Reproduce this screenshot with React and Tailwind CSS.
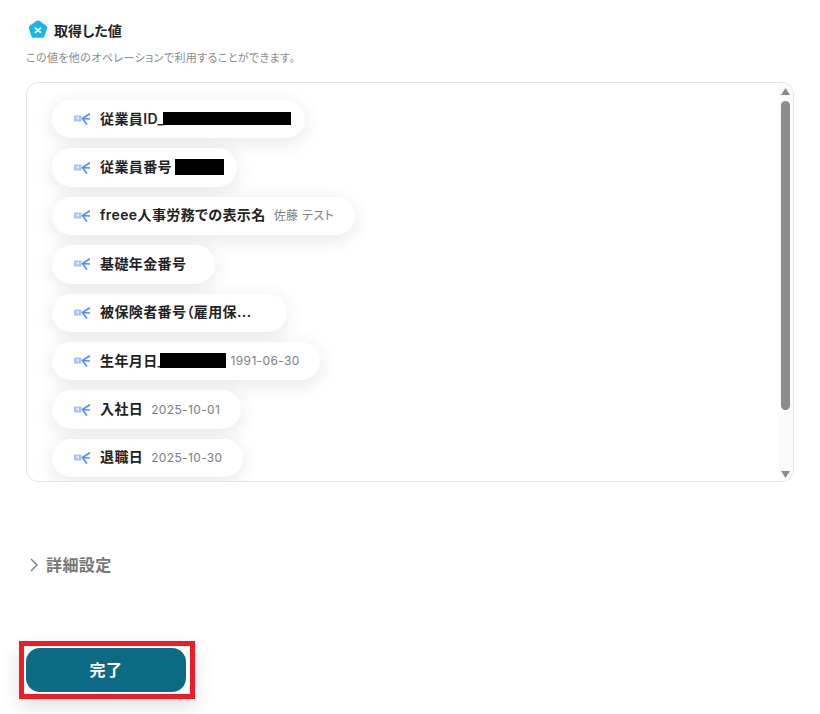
const font = "font-['Inter','Noto_Sans_CJK_JP',sans-serif] [font-feature-settings:'palt']";

const rows = [
  { label: '従業員ID_', mask: 128, maskH: 13, maskClass: '-ml-[1px]', width: 253 },
  { label: '従業員番号', mask: 49, maskH: 16, maskClass: 'ml-[3px]', width: 185 },
  { label: 'freee人事労務での表示名', value: '佐藤 テスト', width: 303 },
  { label: '基礎年金番号', width: 163 },
  { label: '被保険者番号（雇用保...', width: 235 },
  { label: '生年月日_', mask: 66, maskH: 15, maskClass: '-ml-[5px]', value: '1991-06-30', valueClass: 'ml-[5px]', width: 268 },
  { label: '入社日', value: '2025-10-01', width: 189 },
  { label: '退職日', value: '2025-10-30', width: 191 },
];

function Logo() {
  return (
    <svg width="20" height="20" viewBox="0 0 22 22">
      <path d="M9.2 1.1a3 3 0 0 1 3.6 0l7 5a3 3 0 0 1 1.1 3.4l-2.6 8a3 3 0 0 1-2.9 2.1H6.6a3 3 0 0 1-2.9-2.1l-2.6-8a3 3 0 0 1 1.1-3.4z" fill="#16b8e6" />
      <path d="M8.2 9l5.6 4.6M13.8 9l-5.6 4.6" stroke="#fff" strokeWidth="2" strokeLinecap="round" />
    </svg>
  );
}

function OutputIcon() {
  return (
    <svg width="16" height="12" viewBox="0 0 16 12" className="shrink-0">
      <rect x="0" y="2.5" width="7.5" height="6" rx="0.5" fill="#a9c0f7" />
      <path d="M2.5 4h2.5v2.5H2.5z" fill="#e4ebfd" />
      <path d="M15.5 1L8.5 5.5l7 0.5M8.5 5.5L12.5 11" stroke="#5a8cf5" strokeWidth="1.7" fill="none" strokeLinecap="round" strokeLinejoin="round" />
    </svg>
  );
}

function Pill({ row }) {
  return (
    <div
      className="flex h-[38.4px] shrink-0 items-center rounded-full bg-white pl-[22px] shadow-[0_4px_20px_rgba(0,0,0,0.1)]"
      style={{ width: row.width }}
    >
      <OutputIcon />
      <span className="mb-[2px] ml-[10px] whitespace-nowrap text-[14px] font-semibold tracking-[0.4px] text-[#222]">{row.label}</span>
      {row.mask && <span className={`mb-[1px] bg-black ${row.maskClass}`} style={{ width: row.mask, height: row.maskH }} />}
      {row.value && <span className={`${row.valueClass || 'ml-[8px]'} whitespace-nowrap text-[12px] tracking-[0.35px] text-[#7d7d7d]`}>{row.value}</span>}
    </div>
  );
}

export default function App() {
  return (
    <div className={`${font} h-[714px] w-[820px] overflow-hidden bg-white pl-[26px] pt-[19px]`}>
      <div className="flex h-[22px] items-center gap-[6px] pl-[2px]">
        <Logo />
        <h2 className="text-[14px] font-semibold text-[#222]">取得した値</h2>
      </div>
      <p className="mt-[10px] text-[11px] leading-[14px] tracking-[0.4px] text-[#8a8a8a]">この値を他のオペレーションで利用することができます。</p>

      <div className="relative mt-[17px] h-[400px] w-[768px] overflow-hidden rounded-[12px] border border-[#e3e3e3]">
        <div className="flex flex-col gap-[10px] pl-[25px] pt-[17px]">
          {rows.map((row) => (
            <Pill key={row.label} row={row} />
          ))}
        </div>
        <div className="absolute inset-y-0 right-0 flex w-[15px] flex-col items-center bg-[#fbfbfb]">
          <svg width="9" height="7" viewBox="0 0 9 7" className="mt-[5px] shrink-0"><path d="M4.5 0L9 7H0z" fill="#8a8a8a" /></svg>
          <div className="mt-[6px] h-[309px] w-[9px] rounded-full bg-[#8c8c8c]" />
          <svg width="9" height="7" viewBox="0 0 9 7" className="mt-auto mb-[3px] shrink-0"><path d="M0 0h9L4.5 7z" fill="#8a8a8a" /></svg>
        </div>
      </div>

      <div className="mt-[73px] flex h-[20px] items-center gap-[7px] pl-[3px]">
        <svg width="10" height="14" viewBox="0 0 10 14" fill="none" stroke="#777" strokeWidth="1.3"><path d="M2 1l6 6-6 6" /></svg>
        <span className="text-[16px] font-semibold tracking-[0.4px] text-[#777]">詳細設定</span>
      </div>

      <div className="-ml-[7px] mt-[66px] w-[176px] border-[5px] border-[#ee1c25] pb-[2px] pl-[2px] pr-[4px] pt-[2px] shadow-[0_8px_20px_rgba(0,0,0,0.12)]">
        <button className="flex h-[44px] w-full items-center justify-center rounded-[14px] bg-[#0b6a84] text-[16px] font-bold tracking-[0.5px] text-white">完了</button>
      </div>
    </div>
  );
}
